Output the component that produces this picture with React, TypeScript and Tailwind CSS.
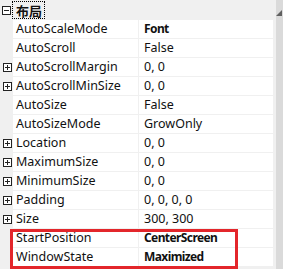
import React from "react";

type Row = { name: string; value: string; expand?: boolean; bold?: boolean };

const rows: Row[] = [
  { name: "AutoScaleMode", value: "Font", bold: true },
  { name: "AutoScroll", value: "False" },
  { name: "AutoScrollMargin", value: "0, 0", expand: true },
  { name: "AutoScrollMinSize", value: "0, 0", expand: true },
  { name: "AutoSize", value: "False" },
  { name: "AutoSizeMode", value: "GrowOnly" },
  { name: "Location", value: "0, 0", expand: true },
  { name: "MaximumSize", value: "0, 0", expand: true },
  { name: "MinimumSize", value: "0, 0", expand: true },
  { name: "Padding", value: "0, 0, 0, 0", expand: true },
  { name: "Size", value: "300, 300", expand: true },
  { name: "StartPosition", value: "CenterScreen", bold: true },
  { name: "WindowState", value: "Maximized", bold: true },
];

function Box({ minus }: { minus?: boolean }) {
  return (
    <svg width="9" height="9" viewBox="0 0 9 9" className="block">
      <rect x="0.5" y="0.5" width="8" height="8" fill="white" stroke="#222" />
      <line x1="2" y1="4.5" x2="7" y2="4.5" stroke="#222" />
      {!minus && <line x1="4.5" y1="2" x2="4.5" y2="7" stroke="#222" />}
    </svg>
  );
}

export default function App() {
  return (
    <div
      className="relative w-[283px] h-[269px] overflow-hidden bg-[#f0f0f0] text-[12.5px] text-[#111]"
      style={{ fontFamily: '"Noto Sans", "Noto Sans CJK SC", sans-serif' }}
    >
      <div className="flex">
        <div className="w-[273px]">
          <div className="flex h-[20px] items-center">
            <div className="w-[12px] flex justify-center pl-[1px]">
              <Box minus />
            </div>
            <div
              className="h-[18px] pl-[3px] pr-[2px] border border-dotted border-black flex items-center font-bold leading-none text-[13px]"
              style={{ fontFamily: '"Noto Sans CJK SC", sans-serif' }}
            >
              布局
            </div>
          </div>
          {rows.map((r) => (
            <div key={r.name} className="flex h-[19px]">
              <div className="w-[13px] flex items-center justify-center pl-[1px]">
                {r.expand && <Box />}
              </div>
              <div className="w-[125px] bg-white border-b border-[#f0f0f0] pl-[3px] flex items-center leading-none">
                {r.name}
              </div>
              <div className="w-[1px] bg-[#f0f0f0]" />
              <div
                className={`flex-1 bg-white border-b border-[#f0f0f0] pl-[5px] flex items-center leading-none ${
                  r.bold ? "font-bold text-[12px] tracking-[-0.6px]" : ""
                }`}
              >
                {r.value}
              </div>
            </div>
          ))}
        </div>
        <div className="w-[10px] h-[269px] flex bg-[#f0f0f0]">
          <div className="w-[3px]" />
          <div className="flex-1 bg-[#dadada] relative">
            <svg width="6" height="6" viewBox="0 0 6 6" className="absolute top-[10px] left-[0px]">
              <polygon points="6,0 6,6 0,6" fill="#606060" />
            </svg>
          </div>
        </div>
      </div>
      <div className="absolute left-[10px] top-[229px] w-[228px] h-[40px] border-[3px] border-[#e3262b]" />
    </div>
  );
}
